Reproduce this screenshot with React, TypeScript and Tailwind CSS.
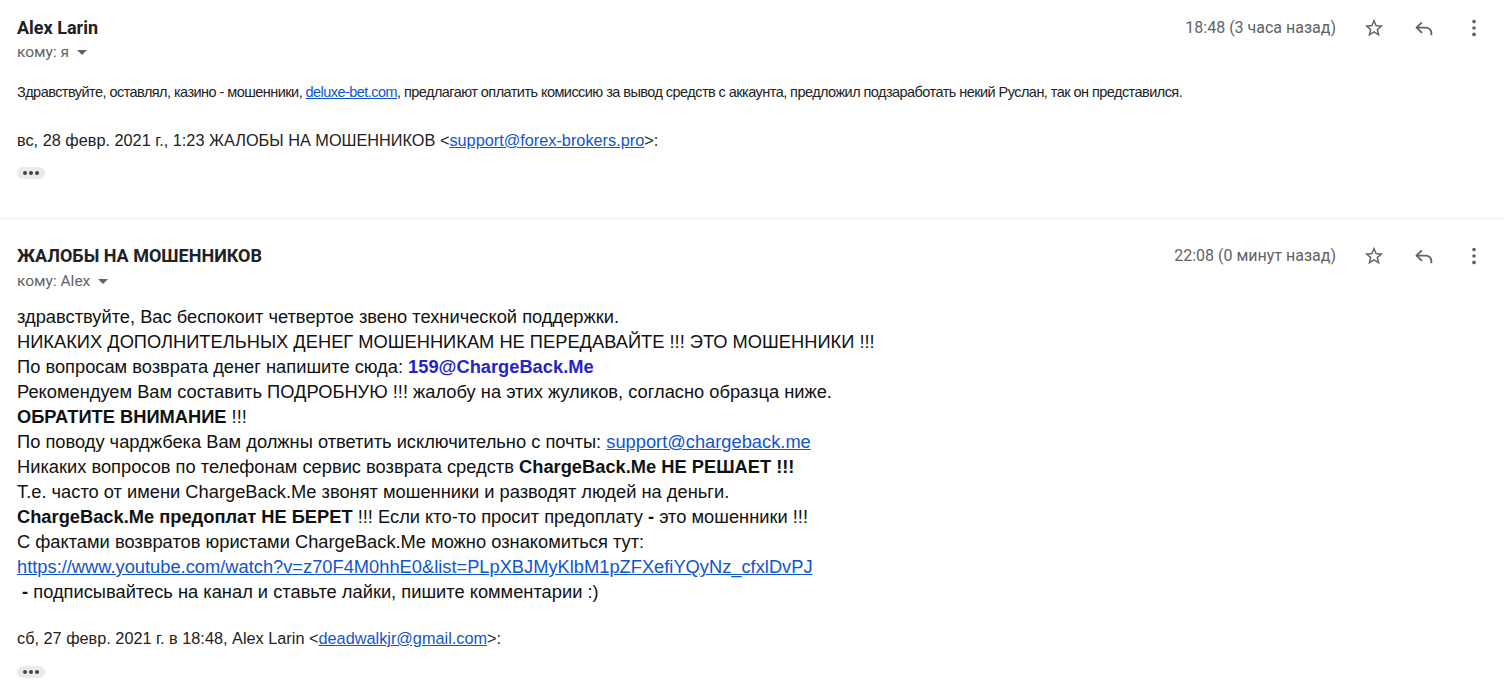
import React from "react";

const StarIcon = () => (
  <svg viewBox="0 0 24 24" width="22" height="22" fill="#5f6368">
    <path d="M22 9.24l-7.19-.62L12 2 9.19 8.63 2 9.24l5.46 4.73L5.82 21 12 17.27 18.18 21l-1.63-7.03L22 9.24zM12 15.4l-3.76 2.27 1-4.28-3.32-2.88 4.38-.38L12 6.1l1.71 4.04 4.38.38-3.32 2.88 1 4.28L12 15.4z" />
  </svg>
);

const ReplyIcon = () => (
  <svg viewBox="0 0 24 24" width="22" height="22" fill="none" stroke="#5f6368" strokeWidth="2" strokeLinecap="square">
    <polyline points="9,6.5 4,11.5 9,16.5" />
    <path d="M4.5 11.5H14a6 6 0 0 1 6 6V19" />
  </svg>
);

const MoreIcon = () => (
  <svg viewBox="0 0 24 24" width="22" height="22" fill="#5f6368">
    <circle cx="12" cy="5" r="2" />
    <circle cx="12" cy="12" r="2" />
    <circle cx="12" cy="19" r="2" />
  </svg>
);

const Caret = () => (
  <svg viewBox="0 0 10 5" width="10" height="5" fill="#5f6368" className="ml-[8px] inline-block">
    <path d="M0 0h10L5 5z" />
  </svg>
);

const Dots = () => (
  <div className="flex h-[12px] w-[28px] items-center justify-center gap-[2px] rounded-[6px] bg-[#e8eaed]">
    <span className="h-[4px] w-[4px] rounded-full bg-[#444]" />
    <span className="h-[4px] w-[4px] rounded-full bg-[#444]" />
    <span className="h-[4px] w-[4px] rounded-full bg-[#444]" />
  </div>
);

interface HeaderProps {
  from: string;
  to: string;
  time: string;
  gap: string;
}

const MessageHeader = ({ from, to, time, gap }: HeaderProps) => (
  <div className="flex items-start justify-between">
    <div>
      <div className="h-[22px] text-[18px] font-bold leading-[22px] text-[#202124]">{from}</div>
      <div className={`${gap} flex items-center text-[15.5px] leading-[20px] text-[#5f6368]`}>
        кому: {to}
        <Caret />
      </div>
    </div>
    <div className="-mt-[9px] flex items-center">
      <span className="text-[16px] leading-[20px] text-[#5f6368]">{time}</span>
      <div className="ml-[18px] flex">
        <button className="flex h-[40px] w-[40px] items-center justify-center"><StarIcon /></button>
        <button className="ml-[10px] flex h-[40px] w-[40px] items-center justify-center"><ReplyIcon /></button>
        <button className="ml-[10px] flex h-[40px] w-[40px] items-center justify-center"><MoreIcon /></button>
      </div>
    </div>
  </div>
);

const link = "text-[#1155cc] underline";

export default function App() {
  return (
    <div className="w-[1504px] h-[680px] overflow-hidden bg-white font-['Roboto','Liberation_Sans',sans-serif]">
      {/* первое письмо */}
      <div className="pl-[17px] pr-[10px] pt-[17px]">
        <MessageHeader from="Alex Larin" to="я" time="18:48 (3 часа назад)" gap="mt-[3px]" />
        <div className="mt-[20px] whitespace-nowrap font-['Liberation_Sans',Arial,sans-serif] text-[14.5px] leading-[20px] tracking-[-0.55px] text-[#222]">
          Здравствуйте, оставлял, казино - мошенники, <a className={link}>deluxe-bet.com</a>, предлагают оплатить комиссию за вывод средств с аккаунта, предложил подзаработать некий Руслан, так он представился.
        </div>
        <div className="mt-[28px] font-['Liberation_Sans',Arial,sans-serif] text-[16.3px] leading-[20px] text-[#222]">
          вс, 28 февр. 2021 г., 1:23 ЖАЛОБЫ НА МОШЕННИКОВ &lt;<a className={link}>support@forex-brokers.pro</a>&gt;:
        </div>
        <div className="mt-[17px]">
          <Dots />
        </div>
      </div>

      <div className="mt-[39px] h-px bg-[#eeeeee]" />

      {/* второе письмо */}
      <div className="pl-[17px] pr-[10px] pt-[26px]">
        <MessageHeader from="ЖАЛОБЫ НА МОШЕННИКОВ" to="Alex" time="22:08 (0 минут назад)" gap="mt-[4px]" />
        <div className="mt-[13px] font-['Liberation_Sans',Arial,sans-serif] text-[18.3px] leading-[25px] text-[#111]">
          <div>здравствуйте, Вас беспокоит четвертое звено технической поддержки.</div>
          <div>НИКАКИХ ДОПОЛНИТЕЛЬНЫХ ДЕНЕГ МОШЕННИКАМ НЕ ПЕРЕДАВАЙТЕ !!! ЭТО МОШЕННИКИ !!!</div>
          <div>
            По вопросам возврата денег напишите сюда: <b className="text-[#2424c8]">159@ChargeBack.Me</b>
          </div>
          <div>Рекомендуем Вам составить ПОДРОБНУЮ !!! жалобу на этих жуликов, согласно образца ниже.</div>
          <div>
            <b>ОБРАТИТЕ ВНИМАНИЕ</b> !!!
          </div>
          <div>
            По поводу чарджбека Вам должны ответить исключительно с почты: <a className={link}>support@chargeback.me</a>
          </div>
          <div>
            Никаких вопросов по телефонам сервис возврата средств <b>ChargeBack.Me НЕ РЕШАЕТ !!!</b>
          </div>
          <div>Т.е. часто от имени ChargeBack.Me звонят мошенники и разводят людей на деньги.</div>
          <div>
            <b>ChargeBack.Me предоплат НЕ БЕРЕТ</b> !!! Если кто-то просит предоплату <b>-</b> это мошенники !!!
          </div>
          <div>С фактами возвратов юристами ChargeBack.Me можно ознакомиться тут:</div>
          <div>
            <a className={link}>https://www.youtube.com/watch?v=z70F4M0hhE0&amp;list=PLpXBJMyKlbM1pZFXefiYQyNz_cfxlDvPJ</a>
          </div>
          <div>
            &nbsp;<b>-</b> подписывайтесь на канал и ставьте лайки, пишите комментарии :)
          </div>
        </div>
        <div className="mt-[24px] font-['Liberation_Sans',Arial,sans-serif] text-[16.3px] leading-[20px] text-[#222]">
          сб, 27 февр. 2021 г. в 18:48, Alex Larin &lt;<a className={link}>deadwalkjr@gmail.com</a>&gt;:
        </div>
        <div className="mt-[18px]">
          <Dots />
        </div>
      </div>
    </div>
  );
}
